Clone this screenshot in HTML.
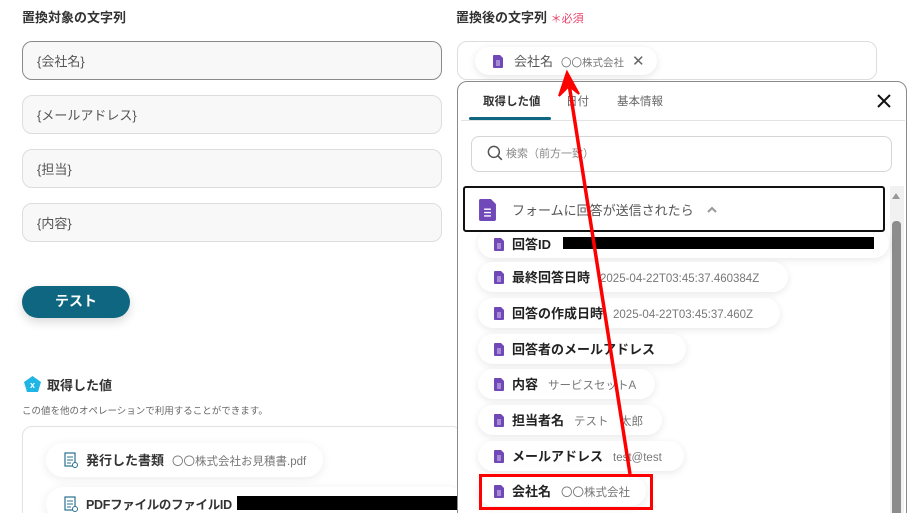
<!DOCTYPE html>
<html><head><meta charset="utf-8"><style>
*{box-sizing:border-box;margin:0;padding:0}
html,body{width:916px;height:513px;overflow:hidden}
body{background:#fff;position:relative;font-family:"Liberation Sans","Noto Sans CJK JP",sans-serif;color:#333}
.a{position:absolute}
.lbl{font-size:13px;font-weight:bold;color:#333}
.inp{position:absolute;left:22px;width:420px;height:39px;border:1px solid #dcdde0;border-radius:10px;background:#f8f8f9;font-size:13px;color:#555;padding:9px 14px}
.pill{position:absolute;left:478px;height:30px;background:#fff;border-radius:15px;box-shadow:0 2px 8px rgba(0,0,0,.09);font-size:13px;font-weight:bold;color:#222;padding:5px 12px 0 16px;white-space:nowrap}
.pill svg{vertical-align:-2px;margin-right:8px}
.pill .v{font-weight:normal;color:#777;font-size:11.5px;margin-left:10px}
</style></head><body>
<div class="a lbl" style="left:22px;top:7px">置換対象の文字列</div>
<div class="inp" style="top:41px;border-color:#8a8a8a">{会社名}</div>
<div class="inp" style="top:95px">{メールアドレス}</div>
<div class="inp" style="top:149px">{担当}</div>
<div class="inp" style="top:203px">{内容}</div>
<div class="a" style="left:22px;top:286px;width:108px;height:32px;border-radius:16px;background:#0e6680;color:#fff;font-weight:bold;font-size:14px;text-align:center;line-height:30px;box-shadow:0 4px 10px rgba(0,0,0,.15)">テスト</div>
<svg class="a" style="left:24px;top:376px" width="17" height="16" viewBox="0 0 17 16"><path d="M8.5 0L17 6 14 16H3L0 6Z" fill="#1fb6e6"/><text x="8.5" y="12" font-size="9" fill="#fff" text-anchor="middle" font-family="Liberation Sans" font-weight="bold">x</text></svg>
<div class="a lbl" style="left:47px;top:375px">取得した値</div>
<div class="a" style="left:22px;top:403px;font-size:9.5px;color:#666">この値を他のオペレーションで利用することができます。</div>
<div class="a" style="left:22px;top:426px;width:440px;height:100px;border:1px solid #e2e2e2;border-radius:10px"></div>
<div class="a" style="left:46px;top:443px;width:277px;height:34px;border-radius:17px;background:#fff;box-shadow:0 2px 10px rgba(0,0,0,.08);font-size:13px;font-weight:bold;padding:7px 0 0 18px;white-space:nowrap"><svg width="14" height="16" style="vertical-align:-3px;margin-right:8px" viewBox="0 0 14 16"><rect x="1" y="1" width="10" height="13" fill="none" stroke="#2a7090" stroke-width="1.2"/><path d="M3 5h6M3 8h6M3 11h4" stroke="#2a7090"/><circle cx="11" cy="13" r="2.5" fill="#fff" stroke="#2a7090"/></svg>発行した書類<span style="font-weight:normal;color:#777;font-size:11.5px;margin-left:8px">〇〇株式会社お見積書.pdf</span></div>
<div class="a" style="left:46px;top:487px;width:420px;height:34px;border-radius:17px;background:#fff;box-shadow:0 2px 10px rgba(0,0,0,.08);font-size:12.5px;letter-spacing:-0.3px;font-weight:bold;padding:7px 0 0 18px;white-space:nowrap"><svg width="14" height="16" style="vertical-align:-3px;margin-right:8px" viewBox="0 0 14 16"><rect x="1" y="1" width="10" height="13" fill="none" stroke="#2a7090" stroke-width="1.2"/><path d="M3 5h6M3 8h6M3 11h4" stroke="#2a7090"/><circle cx="11" cy="13" r="2.5" fill="#fff" stroke="#2a7090"/></svg>PDFファイルのファイルID</div>
<div class="a" style="left:237px;top:496px;width:221px;height:14px;background:#000"></div>

<div class="a lbl" style="left:456px;top:7px">置換後の文字列 <span style="color:#e8436a;font-weight:normal;font-size:11px">＊必須</span></div>
<div class="a" style="left:457px;top:41px;width:420px;height:39px;border:1px solid #dcdde0;border-radius:10px"></div>
<div class="a" style="left:475px;top:47px;width:182px;height:28px;border-radius:14px;background:#fff;box-shadow:0 2px 8px rgba(0,0,0,.1);font-size:13px;color:#555;padding:4px 0 0 18px;white-space:nowrap"><svg width="10" height="13" style="vertical-align:-2px;margin-right:11px" viewBox="0 0 10 13"><path d="M0 1Q0 0 1 0H7L10 3V12Q10 13 9 13H1Q0 13 0 12Z" fill="#7048b8"/><path d="M3 6h4M3 8h4M3 10h4" stroke="#fff" stroke-width=".8"/></svg>会社名<span style="font-size:10.5px;color:#777;margin-left:8px">〇〇株式会社</span><span style="margin-left:8px;color:#666;font-size:15px">✕</span></div>

<div class="a" style="left:457px;top:81px;width:450px;height:445px;border:1.5px solid #8a8a8a;border-radius:10px;background:#fff"></div>
<div class="a" style="left:483px;top:93px;font-size:11.5px;font-weight:bold;color:#333">取得した値</div>
<div class="a" style="left:566px;top:93px;font-size:11.5px;color:#666">日付</div>
<div class="a" style="left:617px;top:93px;font-size:11.5px;color:#666">基本情報</div>
<div class="a" style="left:461px;top:120px;width:444px;height:1px;background:#e3e3e3"></div>
<div class="a" style="left:469px;top:117px;width:82px;height:3px;background:#0e6680;border-radius:2px"></div>
<svg class="a" style="left:877px;top:94px" width="14" height="14"><path d="M1 1L13 13M13 1L1 13" stroke="#111" stroke-width="2"/></svg>
<div class="a" style="left:471px;top:136px;width:421px;height:36px;border:1px solid #d5d5d5;border-radius:8px;font-size:11px;color:#888;padding:8px 0 0 15px"><svg width="16" height="16" style="vertical-align:-4px;margin-right:3px" viewBox="0 0 14 14"><circle cx="6" cy="6" r="4.8" fill="none" stroke="#555" stroke-width="1.3"/><path d="M9.5 9.5L13 13" stroke="#555" stroke-width="1.4"/></svg>検索（前方一致）</div>
<div class="a" style="left:890px;top:186px;width:14px;height:330px;background:#f1f1f1"></div>
<div class="a" style="left:892px;top:221px;width:9px;height:300px;background:#8c8c8c;border-radius:4px"></div>
<div class="a" style="left:892px;top:193px;width:0;height:0;border-left:4.5px solid transparent;border-right:4.5px solid transparent;border-bottom:6px solid #999"></div>

<div class="pill" style="top:228px;width:411px;padding-top:6px">
<svg width="10" height="13" viewBox="0 0 10 13"><path d="M0 1Q0 0 1 0H7L10 3V12Q10 13 9 13H1Q0 13 0 12Z" fill="#7048b8"/><path d="M3 6h4M3 8h4M3 10h4" stroke="#fff" stroke-width=".8"/></svg>回答ID</div>
<div class="a" style="left:563px;top:237px;width:311px;height:12px;background:#000"></div>
<div class="a" style="left:463px;top:186px;width:422px;height:46px;border:2px solid #111;border-radius:3px;background:#fff;font-size:13px;color:#555;padding:11px 0 0 14px"><svg width="17" height="22" style="vertical-align:-6px;margin-right:16px" viewBox="0 0 10 13"><path d="M0 1Q0 0 1 0H7L10 3V12Q10 13 9 13H1Q0 13 0 12Z" fill="#7048b8"/><path d="M3 6h4M3 8h4M3 10h4" stroke="#fff" stroke-width=".8"/></svg>フォームに回答が送信されたら<svg width="12" height="8" style="margin-left:12px;vertical-align:1px" viewBox="0 0 12 8"><path d="M2 6L6 2 10 6" fill="none" stroke="#999" stroke-width="2"/></svg></div>

<div class="pill" style="top:262px;width:310px"><svg width="10" height="13" viewBox="0 0 10 13"><path d="M0 1Q0 0 1 0H7L10 3V12Q10 13 9 13H1Q0 13 0 12Z" fill="#7048b8"/><path d="M3 6h4M3 8h4M3 10h4" stroke="#fff" stroke-width=".8"/></svg>最終回答日時<span class="v">2025-04-22T03:45:37.460384Z</span></div>
<div class="pill" style="top:298px;width:302px"><svg width="10" height="13" viewBox="0 0 10 13"><path d="M0 1Q0 0 1 0H7L10 3V12Q10 13 9 13H1Q0 13 0 12Z" fill="#7048b8"/><path d="M3 6h4M3 8h4M3 10h4" stroke="#fff" stroke-width=".8"/></svg>回答の作成日時<span class="v">2025-04-22T03:45:37.460Z</span></div>
<div class="pill" style="top:334px;width:208px"><svg width="10" height="13" viewBox="0 0 10 13"><path d="M0 1Q0 0 1 0H7L10 3V12Q10 13 9 13H1Q0 13 0 12Z" fill="#7048b8"/><path d="M3 6h4M3 8h4M3 10h4" stroke="#fff" stroke-width=".8"/></svg>回答者のメールアドレス</div>
<div class="pill" style="top:369px;width:177px"><svg width="10" height="13" viewBox="0 0 10 13"><path d="M0 1Q0 0 1 0H7L10 3V12Q10 13 9 13H1Q0 13 0 12Z" fill="#7048b8"/><path d="M3 6h4M3 8h4M3 10h4" stroke="#fff" stroke-width=".8"/></svg>内容<span class="v">サービスセットA</span></div>
<div class="pill" style="top:405px;width:184px"><svg width="10" height="13" viewBox="0 0 10 13"><path d="M0 1Q0 0 1 0H7L10 3V12Q10 13 9 13H1Q0 13 0 12Z" fill="#7048b8"/><path d="M3 6h4M3 8h4M3 10h4" stroke="#fff" stroke-width=".8"/></svg>担当者名<span class="v">テスト　太郎</span></div>
<div class="pill" style="top:441px;width:206px"><svg width="10" height="13" viewBox="0 0 10 13"><path d="M0 1Q0 0 1 0H7L10 3V12Q10 13 9 13H1Q0 13 0 12Z" fill="#7048b8"/><path d="M3 6h4M3 8h4M3 10h4" stroke="#fff" stroke-width=".8"/></svg>メールアドレス<span class="v">test@test</span></div>
<div class="pill" style="top:476px;width:168px"><svg width="10" height="13" viewBox="0 0 10 13"><path d="M0 1Q0 0 1 0H7L10 3V12Q10 13 9 13H1Q0 13 0 12Z" fill="#7048b8"/><path d="M3 6h4M3 8h4M3 10h4" stroke="#fff" stroke-width=".8"/></svg>会社名<span class="v">〇〇株式会社</span></div>
<div class="a" style="left:479px;top:474px;width:174px;height:36px;border:3px solid #f00"></div>
<svg class="a" style="left:0;top:0" width="916" height="513"><path d="M630 474L569 84" stroke="#f00" stroke-width="3.5"/><path d="M567 72L559 96 569 86 579 94Z" fill="#f00" stroke="#f00" stroke-width="2"/></svg>
</body></html>
